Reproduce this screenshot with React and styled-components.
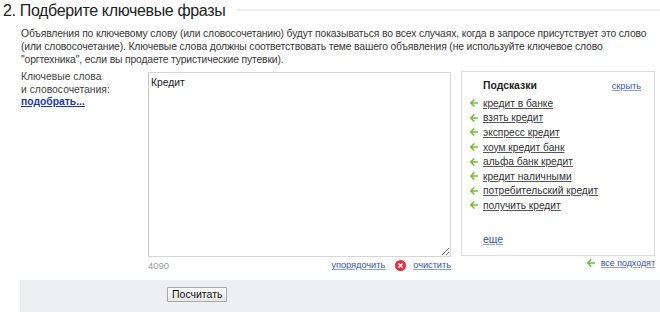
import React from "react";
import styled, { createGlobalStyle } from "styled-components";

const Global = createGlobalStyle`
  html, body { margin: 0; padding: 0; background: #fff; }
  body { font-family: "Liberation Sans", Arial, sans-serif; color: #333; }
`;

const Page = styled.div`
  width: 660px;
  height: 312px;
  overflow: hidden;
`;

const HeadRow = styled.div`
  display: flex;
  align-items: center;
  gap: 12px;
  height: 22px;
  padding-left: 3px;
`;

const Title = styled.h2`
  margin: 0;
  font-weight: normal;
  font-size: 16px;
  letter-spacing: -0.35px;
  line-height: 22px;
  color: #222;
  white-space: nowrap;
`;

const Rule = styled.div`
  flex: 1;
  height: 0;
  border-top: 2px solid #ececec;
  margin-top: -3px;
`;

const Body = styled.div`
  padding: 5px 0 0 21px;
`;

const Intro = styled.p`
  margin: 0;
  font-size: 10.35px;
  letter-spacing: -0.14px;
  line-height: 13px;
  color: #383838;
  white-space: nowrap;
`;

const Row = styled.div`
  display: flex;
  margin-top: 5px;
`;

const LabelCol = styled.div`
  width: 127px;
  flex: none;
  font-size: 10.35px;
  line-height: 12.5px;
  color: #444;
`;

const PickLink = styled.a`
  font-weight: bold;
  color: #1b3aa8;
  text-decoration: underline;
  cursor: pointer;
`;

const EditorCol = styled.div`
  width: 303px;
  flex: none;
  display: flex;
  flex-direction: column;
`;

const Area = styled.textarea`
  box-sizing: border-box;
  width: 303px;
  height: 185px;
  margin: 1px 0 0;
  padding: 3px 2px;
  border: 1px solid #d6d6d6;
  border-left-color: #c8c8c8;
  font-family: "Liberation Sans", Arial, sans-serif;
  font-size: 10.35px;
  line-height: 13px;
  color: #222;
  resize: both;
  outline: none;
`;

const UnderRow = styled.div`
  display: flex;
  align-items: center;
  justify-content: space-between;
  height: 14px;
  margin-top: 1px;
  font-size: 9.5px;
`;

const Counter = styled.span`
  color: #999;
`;

const Actions = styled.div`
  display: flex;
  align-items: center;
  gap: 6px;
`;

const BlueLink = styled.a`
  color: #3355bb;
  text-decoration: underline;
  text-decoration-color: #8ea0d8;
  font-size: ${(p) => p.$size || "9.2px"};
  cursor: pointer;
`;

const ClearIcon = styled.span`
  display: inline-flex;
  width: 11px;
  height: 11px;
  margin: 0 1px 0 4px;
`;

const SideCol = styled.div`
  width: 194px;
  flex: none;
  margin-left: 10px;
  display: flex;
  flex-direction: column;
`;

const Panel = styled.div`
  box-sizing: border-box;
  height: 185px;
  border: 1px solid #dcdcdc;
  box-shadow: 0 0 1px #eee;
  padding: 8px 13px 0 8px;
  display: flex;
  flex-direction: column;
`;

const PanelHead = styled.div`
  display: flex;
  justify-content: space-between;
  align-items: baseline;
  padding-left: 13px;
  height: 16px;
`;

const PanelTitle = styled.span`
  font-weight: bold;
  font-size: 10.4px;
  color: #222;
`;

const List = styled.ul`
  list-style: none;
  margin: 0;
  padding: 0;
`;

const Item = styled.li`
  display: flex;
  align-items: center;
  gap: 5px;
  height: 14.6px;
  font-size: 10.2px;
`;

const Suggest = styled.a`
  color: #333;
  text-decoration: underline;
  text-decoration-color: #555;
  cursor: pointer;
`;

const More = styled.div`
  margin-top: auto;
  padding: 0 0 8px 13px;
`;

const AllRow = styled.div`
  display: flex;
  justify-content: flex-end;
  align-items: center;
  gap: 6px;
  height: 14px;
  margin-top: 0;
  margin-right: 0;
`;

const Footer = styled.div`
  margin: 8px 0 0 20px;
  height: 40px;
  background: #eeeff0;
  padding: 4px 0 0 147px;
  box-sizing: border-box;
`;

const Button = styled.button`
  height: 15px;
  padding: 0 4px;
  font-family: "Liberation Sans", Arial, sans-serif;
  font-size: 10.5px;
  line-height: 13px;
  color: #111;
  background: linear-gradient(#fdfdfd, #e6e6e6);
  border: 1px solid #a8a8a8;
  border-radius: 1px;
  cursor: pointer;
`;

const Arrow = () => (
  <svg width="8" height="8" viewBox="0 0 8 8" style={{ flex: "none" }}>
    <path d="M0.8 4 L3.8 1 M0.8 4 L3.8 7 M0.8 4 H7.6" stroke="#74c036" strokeWidth="1.7" fill="none" strokeLinecap="round" />
  </svg>
);

const suggestions = [
  "кредит в банке",
  "взять кредит",
  "экспресс кредит",
  "хоум кредит банк",
  "альфа банк кредит",
  "кредит наличными",
  "потребительский кредит",
  "получить кредит",
];

export default function App() {
  return (
    <Page>
      <Global />
      <HeadRow>
        <Title>2. Подберите ключевые фразы</Title>
        <Rule />
      </HeadRow>
      <Body>
        <Intro>
          Объявления по ключевому слову (или словосочетанию) будут показываться во всех случаях, когда в запросе присутствует это слово
          <br />
          (или словосочетание). Ключевые слова должны соответствовать теме вашего объявления (не используйте ключевое слово
          <br />
          "оргтехника", если вы продаете туристические путевки).
        </Intro>
        <Row>
          <LabelCol>
            Ключевые слова
            <br />и словосочетания:
            <br />
            <PickLink>подобрать...</PickLink>
          </LabelCol>
          <EditorCol>
            <Area defaultValue="Кредит" />
            <UnderRow>
              <Counter>4090</Counter>
              <Actions>
                <BlueLink>упорядочить</BlueLink>
                <ClearIcon>
                  <svg width="11" height="11" viewBox="0 0 11 11">
                    <circle cx="5.5" cy="5.5" r="5.5" fill="#e5303a" />
                    <path d="M3.5 3.5 L7.5 7.5 M7.5 3.5 L3.5 7.5" stroke="#fff" strokeWidth="1.6" />
                  </svg>
                </ClearIcon>
                <BlueLink>очистить</BlueLink>
              </Actions>
            </UnderRow>
          </EditorCol>
          <SideCol>
            <Panel>
              <PanelHead>
                <PanelTitle>Подсказки</PanelTitle>
                <BlueLink>скрыть</BlueLink>
              </PanelHead>
              <List>
                {suggestions.map((s) => (
                  <Item key={s}>
                    <Arrow />
                    <Suggest>{s}</Suggest>
                  </Item>
                ))}
              </List>
              <More>
                <BlueLink $size="10.5px">еще</BlueLink>
              </More>
            </Panel>
            <AllRow>
              <Arrow />
              <BlueLink $size="8.9px">все подходят</BlueLink>
            </AllRow>
          </SideCol>
        </Row>
      </Body>
      <Footer>
        <Button>Посчитать</Button>
      </Footer>
    </Page>
  );
}
